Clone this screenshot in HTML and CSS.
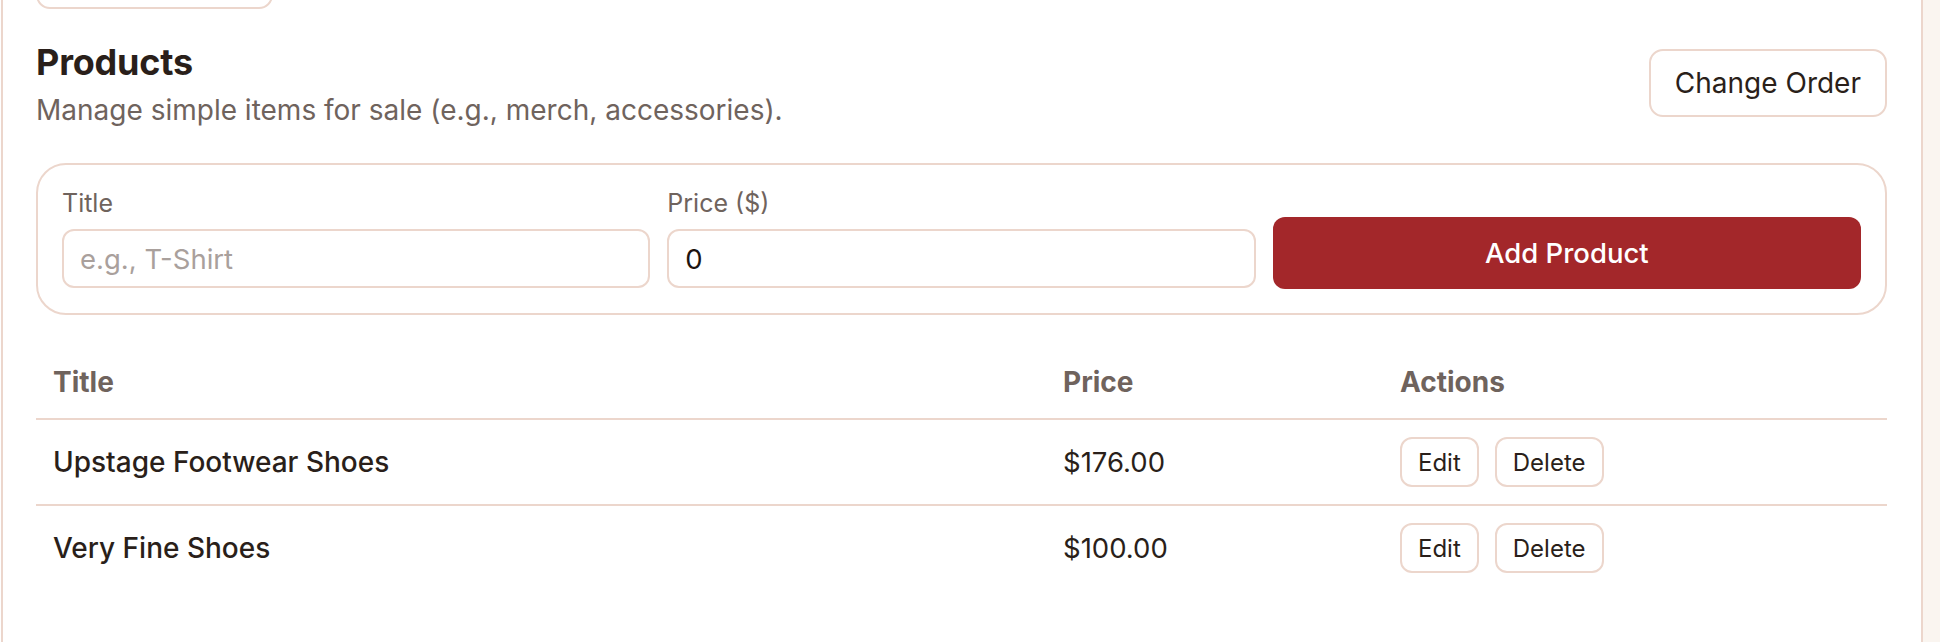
FILE: index.html
```html
<!DOCTYPE html>
<html lang="en">
<head>
<meta charset="utf-8">
<title>Products</title>
<link rel="stylesheet" href="styles.css">
</head>
<body>
<div class="main">
  <div class="card">
    <div class="prev-box" aria-hidden="true"></div>

    <div class="section-head">
      <div class="head-text">
        <h2 class="title">Products</h2>
        <p class="desc">Manage simple items for sale (e.g., merch, accessories).</p>
      </div>
      <button class="btn-outline btn-order" type="button">Change Order</button>
    </div>

    <form class="add-form">
      <div class="field">
        <label class="label" for="p-title">Title</label>
        <input class="input" id="p-title" type="text" placeholder="e.g., T-Shirt">
      </div>
      <div class="field">
        <label class="label" for="p-price">Price ($)</label>
        <input class="input" id="p-price" type="text" value="0">
      </div>
      <button class="btn-primary" type="button">Add Product</button>
    </form>

    <table class="products">
      <thead>
        <tr>
          <th class="col-title">Title</th>
          <th class="col-price">Price</th>
          <th class="col-actions">Actions</th>
        </tr>
      </thead>
      <tbody>
        <tr>
          <td class="cell-title">Upstage Footwear Shoes</td>
          <td class="cell-price">$176.00</td>
          <td>
            <div class="actions">
              <button class="btn-small" type="button">Edit</button>
              <button class="btn-small" type="button">Delete</button>
            </div>
          </td>
        </tr>
        <tr>
          <td class="cell-title">Very Fine Shoes</td>
          <td class="cell-price">$100.00</td>
          <td>
            <div class="actions">
              <button class="btn-small" type="button">Edit</button>
              <button class="btn-small" type="button">Delete</button>
            </div>
          </td>
        </tr>
      </tbody>
    </table>
  </div>
</div>
</body>
</html>
```

FILE: styles.css
```css
* { box-sizing: border-box; }

html, body {
  margin: 0;
  padding: 0;
}

body {
  background: #faf5f0;
  font-family: Inter, "Noto Sans", "Liberation Sans", sans-serif;
  color: #2a1f1a;
  overflow: hidden;
}

.main {
  width: 1923px;
  min-height: 700px;
  background: #ffffff;
  padding-left: 1px;
}

.card {
  min-height: 700px;
  border-left: 2px solid #ecd6cc;
  border-right: 2px solid #ecd6cc;
  padding: 0 34px 60px 33px;
}

.prev-box {
  width: 237px;
  height: 62px;
  margin-top: -53px;
  background: #fff;
  border: 2px solid #ecd6cc;
  border-radius: 14px;
}

.section-head {
  display: flex;
  align-items: center;
  justify-content: space-between;
  margin-top: 29px;
}

.title {
  margin: 0;
  font-size: 36px;
  line-height: 48px;
  font-weight: 700;
  color: #2a1f1a;
  letter-spacing: -0.2px;
}

.desc {
  margin: 4px 0 0;
  font-size: 28px;
  line-height: 40px;
  color: #6f635d;
}

.btn-outline {
  background: #fff;
  border: 2px solid #ecd6cc;
  border-radius: 14px;
  font-family: inherit;
  color: #2a1f1a;
  cursor: pointer;
}

.btn-order {
  height: 68px;
  padding: 12px 24px;
  font-size: 28px;
  line-height: 40px;
  margin-top: -2px;
}

.add-form {
  display: grid;
  grid-template-columns: 1fr 1fr 1fr;
  gap: 17px;
  align-items: end;
  margin-top: 33px;
  padding: 20px 24px 25px;
  border: 2px solid #ecd6cc;
  border-radius: 30px;
}

.field {
  display: flex;
  flex-direction: column;
}

.label {
  font-size: 25px;
  line-height: 36px;
  color: #6f635d;
  margin-bottom: 8px;
}

.input {
  height: 59px;
  border: 2px solid #ecd6cc;
  border-radius: 12px;
  padding: 0 16px;
  font-family: inherit;
  font-size: 27.5px;
  color: #1d1410;
  background: #fff;
  outline: none;
}

.input::placeholder {
  color: #a9a09c;
}

.btn-primary {
  height: 72px;
  margin-bottom: -1px;
  background: #a3272a;
  color: #fff;
  border: none;
  border-radius: 12px;
  font-family: inherit;
  font-size: 27.5px;
  font-weight: 500;
  cursor: pointer;
}

.products {
  width: 100%;
  margin-top: 31px;
  border-collapse: collapse;
  table-layout: fixed;
}

.products th {
  text-align: left;
  padding: 16px 17px;
  font-size: 28px;
  line-height: 40px;
  font-weight: 700;
  color: #6f635d;
  border-bottom: 2px solid #ecd6cc;
}

.col-title { width: 1010px; }
.col-price { width: 337px; }

.products td {
  padding: 17px 17px;
  font-size: 27.5px;
  line-height: 40px;
  color: #2a1f1a;
  vertical-align: middle;
}

.products tbody tr:not(:last-child) td {
  border-bottom: 2px solid #ecd6cc;
}

.products td.cell-title {
  font-size: 28px;
  font-weight: 500;
}

.cell-price { font-weight: 400; }

.actions {
  display: flex;
  gap: 16px;
}

.btn-small {
  height: 50px;
  padding: 0 16px;
  background: #fff;
  border: 2px solid #ecd6cc;
  border-radius: 12px;
  font-family: inherit;
  font-size: 24px;
  color: #2a1f1a;
  cursor: pointer;
}
```
